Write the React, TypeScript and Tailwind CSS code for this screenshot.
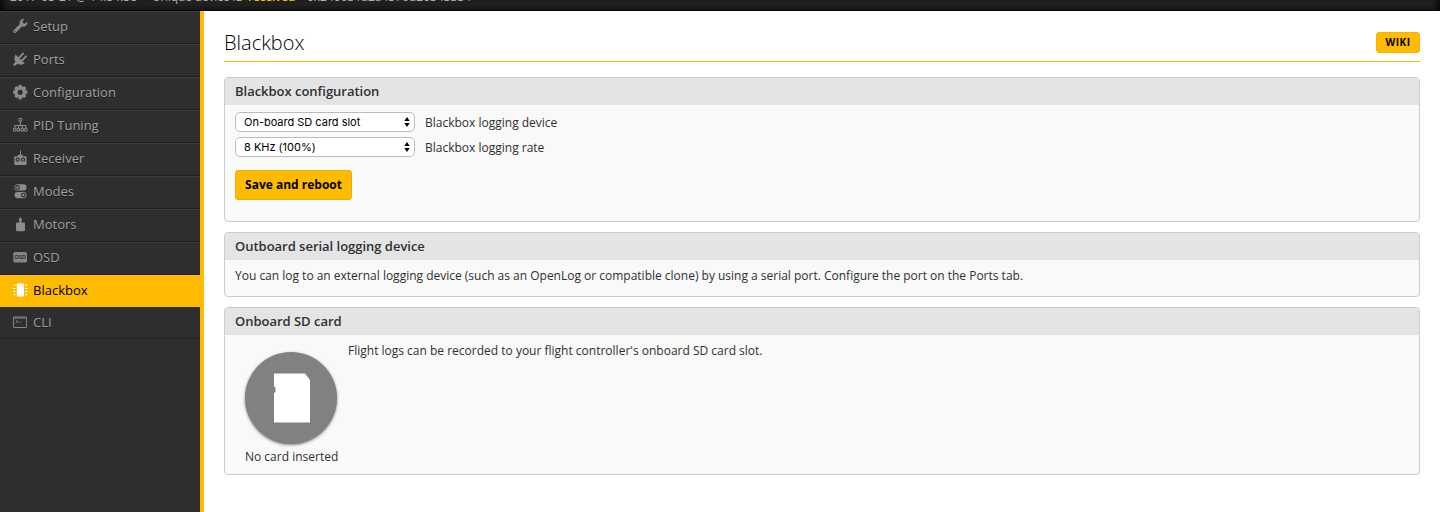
import React from "react";

const Wrench = () => (
  <svg width="16" height="16" viewBox="0 0 16 16">
    <path d="M2.8 13.4 9 7.2" stroke="#8b8b8b" strokeWidth="3.200" strokeLinecap="round" />
    <path d="M15.2 3.6a4 4 0 0 1-5.6 4.7A4 4 0 0 1 7.9 3.6 4 4 0 0 1 12.4.9L10.500 3.200l.5 2 2.000.5z" fill="#8b8b8b" />
    <circle cx="2.900" cy="13.300" r=".6" fill="#2e2e2e" />
  </svg>
);

const Plug = () => (
  <svg width="16" height="16" viewBox="0 0 16 16" fill="#8b8b8b">
    <path d="M3.600 3.400 12.800 12.600C10 14 7.400 13.900 5.400 12.700L3.200 14.800H1.400V13L3.400 10.900C2.100 8.400 2.300 5.600 3.600 3.400z" />
    <path d="M7.600 6.300 11 2.600M10.200 9.200 14 5.400" stroke="#8b8b8b" strokeWidth="2" strokeLinecap="round" />
  </svg>
);

const Gear = () => (
  <svg width="16" height="16" viewBox="0 0 16 16" fill="none" stroke="#8b8b8b">
    <circle cx="8.200" cy="8.200" r="4.200" strokeWidth="3.300" />
    <path d="M8.200 1v3M8.200 12.400v3M1 8.200h3M12.400 8.200h3M3.200 3.200l2 2M11.200 11.200l2 2M3.200 13.200l2-2M11.200 5.200l2-2" strokeWidth="3.200" />
  </svg>
);

const Tree = () => (
  <svg width="16" height="16" viewBox="0 0 16 16" fill="none" stroke="#8b8b8b" strokeWidth="1.100">
    <circle cx="8.300" cy="2.700" r="1.500" />
    <path d="M8.300 4.200v4.300M2.800 11V8.500h11V11M6.500 8.500V11M10.200 8.500V11" />
    <circle cx="2.800" cy="12.700" r="1.400" />
    <circle cx="6.500" cy="12.700" r="1.400" />
    <circle cx="10.200" cy="12.700" r="1.400" />
    <circle cx="13.800" cy="12.700" r="1.400" />
  </svg>
);

const Remote = () => (
  <svg width="16" height="16" viewBox="0 0 16 16">
    <path d="M8.500 .5v5" stroke="#8b8b8b" strokeWidth="1" />
    <path d="M5.800 4.800h5v2h-5z" fill="#8b8b8b" />
    <rect x="2.300" y="6.200" width="12.200" height="8.800" rx="1.200" fill="#8b8b8b" />
    <g fill="#8b8b8b" stroke="#303030" strokeWidth="1.100">
      <circle cx="5.700" cy="9.700" r="1.600" />
      <circle cx="11.100" cy="9.700" r="1.600" />
    </g>
  </svg>
);

const Toggles = () => (
  <svg width="16" height="16" viewBox="0 0 16 16">
    <rect x="2.500" y="1.300" width="12" height="6.200" rx="3.100" fill="#8b8b8b" />
    <rect x="2.500" y="9" width="12" height="6.200" rx="3.100" fill="#8b8b8b" />
    <g fill="#8b8b8b" stroke="#303030" strokeWidth="1.100">
      <circle cx="5.500" cy="4.400" r="1.800" />
      <circle cx="11.300" cy="12.100" r="1.800" />
    </g>
  </svg>
);

const Motor = () => (
  <svg width="16" height="16" viewBox="0 0 16 16" fill="#8b8b8b">
    <path d="M8.400.8 10 3.800 9.400 5.700V7H7.400V5.700L6.800 3.800z" />
    <rect x="4" y="6.500" width="9" height="8.700" rx="1.300" />
  </svg>
);

const Osd = () => (
  <svg width="16" height="16" viewBox="0 0 16 16">
    <rect x="1.300" y="3" width="13.700" height="10.400" rx="1.500" fill="#858585" />
    <text x="8.200" y="10.200" textAnchor="middle" textLength="11.500" lengthAdjust="spacingAndGlyphs" className="fill-[#2e2e2e] font-['Liberation_Sans',sans-serif] text-[5.500px] font-bold [text-shadow:none]">OSD</text>
  </svg>
);

const Chip = () => (
  <svg width="16" height="16" viewBox="0 0 16 16" fill="#fff">
    <rect x="4.800" y="1.500" width="7.200" height="13" rx="1" />
    <path d="M1.500 3.200h2M1 6.500h2.500M1 9.500h2.500M1.500 12.700h2M13.200 3.200h2M13.200 6.500h2.500M13.200 9.500h2.500M13.200 12.700h2" stroke="#fff" strokeWidth="1.200" />
  </svg>
);

const Terminal = () => (
  <svg width="16" height="16" viewBox="0 0 16 16" fill="none" stroke="#858585">
    <rect x="1.500" y="3" width="13" height="10.500" rx=".5" />
    <path d="M1.500 4h13" strokeWidth="1.100" />
    <path d="m3.700 6 1.800 1.500-1.800 1.500M6 8h1.300M8 8h1.300" strokeWidth=".9" />
  </svg>
);

const tabs = [
  { name: "Setup", Icon: Wrench },
  { name: "Ports", Icon: Plug },
  { name: "Configuration", Icon: Gear },
  { name: "PID Tuning", Icon: Tree },
  { name: "Receiver", Icon: Remote },
  { name: "Modes", Icon: Toggles },
  { name: "Motors", Icon: Motor },
  { name: "OSD", Icon: Osd },
  { name: "Blackbox", Icon: Chip, active: true },
  { name: "CLI", Icon: Terminal, last: true },
];

function Sidebar() {
  return (
    <nav className="w-[204px] shrink-0 border-r-4 border-[#ffbb00] bg-[#2e2e2e]">
      {tabs.map(({ name, Icon, active, last }) => (
        <div
          key={name}
          className={
            active
              ? "flex h-8 items-center bg-[#ffbb00] pb-0.5 pl-3 text-black"
              : last
                ? "flex h-8 items-center border-b border-[#222] pb-px pl-3 text-[#a0a0a0] [text-shadow:0_1px_rgba(0,0,0,0.45)]"
                : "flex h-[33px] items-center border-t border-b border-t-[#3b3b3b] border-b-[#202020] pb-[3px] pl-3 text-[#a0a0a0] [text-shadow:0_1px_rgba(0,0,0,0.45)]"
          }
        >
          <Icon />
          <span className="ml-[5px] text-[13px] leading-5">{name}</span>
        </div>
      ))}
    </nav>
  );
}

function Panel({ title, className, children }: { title: string; className: string; children: React.ReactNode }) {
  return (
    <section className={`overflow-hidden rounded-[4px] border border-[#ccc] bg-[#f9f9f9] ${className}`}>
      <h2 className="h-[27px] bg-[#e4e4e4] pl-2.5 text-[13px] leading-[27px] font-semibold tracking-[-0.02px] text-[#303030]">{title}</h2>
      {children}
    </section>
  );
}

function Select({ value }: { value: string }) {
  return (
    <div className="flex h-5 w-[180px] items-center justify-between rounded-[5px] border border-[#bcbcbc] bg-white pr-1 pl-2 font-['Inter',sans-serif] text-[11px] text-black">
      <span className="tracking-[-0.01px]">{value}</span>
      <svg width="6" height="10" viewBox="0 0 6 10">
        <path d="M3 0 5.700 4H.3zM3 10 .3 6h5.400z" fill="#000" />
      </svg>
    </div>
  );
}

export default function App() {
  return (
    <div className="flex h-[512px] w-[1440px] flex-col overflow-hidden bg-white font-['Open_Sans',sans-serif] text-[12px] text-[#303030]">
      <header className="flex h-[11px] shrink-0 items-end overflow-hidden bg-linear-to-b from-[#262626] to-[#161616] pb-1.5 pl-2.5 text-[12px] leading-4 whitespace-nowrap text-[#b0b0b0] shadow-[inset_0_-1px_#0c0808,inset_8px_0_8px_-6px_#000,inset_-8px_0_8px_-6px_#000]">
        <span className="w-[142px]">2017-05-21 @ 14:54:58</span>
        <span className="w-[96px] tracking-[-0.15px]">Unique device ID</span>
        <span className="w-[52px] font-semibold tracking-[-0.25px] text-[#ffbb00]">received</span>
        <span>- 0x240031a2a4576d20343334</span>
      </header>
      <div className="flex min-h-0 flex-1">
        <Sidebar />
        <main className="flex-1 px-5 pt-[15px]">
          <div className="flex h-9 items-start justify-between border-b border-[#ffbb00]">
            <h1 className="pt-px text-[20px] leading-8 font-light text-black">Blackbox</h1>
            <button className="mt-1.5 h-[21px] w-11 rounded-[3px] border border-[#f5b400] bg-[#ffbb00] text-[10px] leading-[19px] font-bold tracking-[0.500px] text-black">WIKI</button>
          </div>
          <Panel title="Blackbox configuration" className="mt-[15px] h-[145px]">
            <div className="px-2.5 pt-[7px]">
              <div className="mb-[5px] flex h-5 items-center gap-2.5">
                <Select value="On-board SD card slot" />
                <span className="pt-0.5">Blackbox logging device</span>
              </div>
              <div className="flex h-5 items-center gap-2.5">
                <Select value="8 KHz (100%)" />
                <span className="pt-0.5">Blackbox logging rate</span>
              </div>
              <button className="mt-[13px] h-[30px] w-[117px] rounded-[3px] border border-[#e8ae0c] bg-[#ffbb00] text-[12px] leading-[28px] font-bold text-black">Save and reboot</button>
            </div>
          </Panel>
          <Panel title="Outboard serial logging device" className="mt-2.5 h-[65px]">
            <p className="px-2.5 pt-1.5 leading-5 tracking-[-0.006px]">You can log to an external logging device (such as an OpenLog or compatible clone) by using a serial port. Configure the port on the Ports tab.</p>
          </Panel>
          <Panel title="Onboard SD card" className="mt-2.5 h-[168px]">
            <div className="flex pt-[7px] pl-5">
              <div className="w-[103px] pt-2.5">
                <div className="flex size-[92px] items-center justify-center rounded-full bg-[#818181] shadow-[0_1px_3px_rgba(0,0,0,0.5)]">
                  <svg width="36" height="50" viewBox="0 0 36 50" className="ml-0.5">
                    <path d="M0 .5h31l5 6.500v42.500H0V20l1.500-1v-4.500L0 13.500z" fill="#fff" />
                  </svg>
                </div>
                <div className="mt-[3px] leading-5 whitespace-nowrap">No card inserted</div>
              </div>
              <p className="pt-px leading-4">Flight logs can be recorded to your flight controller's onboard SD card slot.</p>
            </div>
          </Panel>
        </main>
      </div>
    </div>
  );
}
